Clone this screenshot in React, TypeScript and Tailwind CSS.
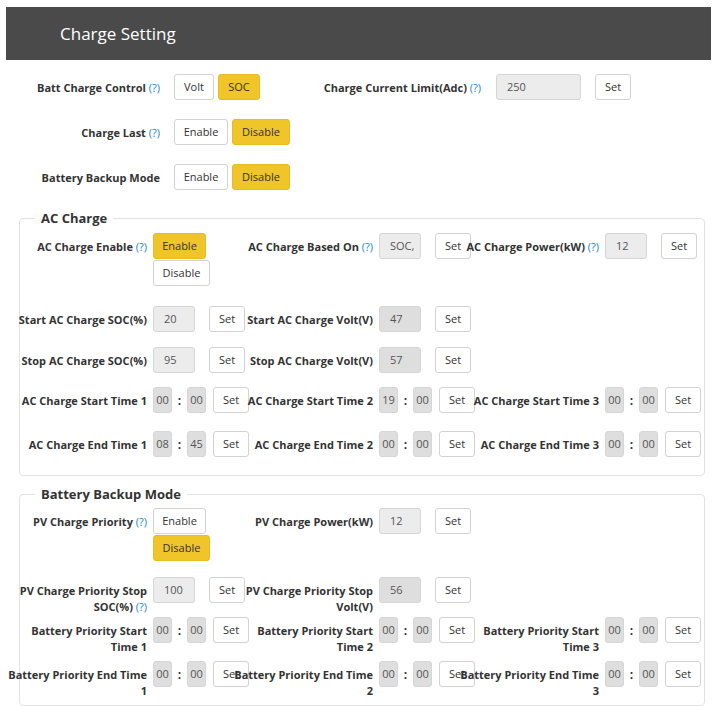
import type { ReactNode } from "react";

const FONT = "font-['Open_Sans','Noto_Sans',sans-serif]";

function Help() {
  return <span className="font-normal text-[#1c87d4]"> (?)</span>;
}

function Btn({ children, active, className = "" }: { children: ReactNode; active?: boolean; className?: string }) {
  return (
    <button
      className={`h-[26px] shrink-0 rounded-[3px] border text-[11px] text-[#333] flex items-center justify-center ${
        active ? "bg-[#f0c529] border-[#e9bd1c]" : "bg-white border-[#d3d3d3]"
      } ${className}`}
    >
      {children}
    </button>
  );
}

function SetBtn({ className = "" }: { className?: string }) {
  return <Btn className={`w-[36px] ${className}`}>Set</Btn>;
}

function Field({ value, dark, className = "" }: { value: string; dark?: boolean; className?: string }) {
  return (
    <input
      readOnly
      value={value}
      className={`h-[26px] shrink-0 rounded-[3px] border border-[#d6d6d6] pl-[10px] pr-0 pb-[2px] text-[11px] text-[#555] outline-none ${
        dark ? "bg-[#dedede]" : "bg-[#ececec]"
      } ${className}`}
    />
  );
}

function TimeBox({ value }: { value: string }) {
  return (
    <input
      readOnly
      value={value}
      className="h-[26px] w-[19px] shrink-0 rounded-[3px] border border-[#d6d6d6] bg-[#dedede] px-0 pb-[2px] text-center text-[11px] text-[#555] outline-none"
    />
  );
}

function Time({ h, m }: { h: string; m: string }) {
  return (
    <div className="flex items-start">
      <TimeBox value={h} />
      <span className="w-[15px] shrink-0 pt-[6px] text-center text-[12px] font-bold leading-[16px] text-[#333]">:</span>
      <TimeBox value={m} />
      <SetBtn className="ml-[7px]" />
    </div>
  );
}

function Cell({ label, help, children }: { label: ReactNode; help?: boolean; children?: ReactNode }) {
  return (
    <div className="flex w-[226px] shrink-0 items-start">
      <div className="w-[140px] shrink-0 pt-[6px] text-right text-[11px] font-bold leading-[16px] text-[#333]">
        {label}
        {help && <Help />}
      </div>
      <div className="ml-[6px] flex items-start">{children}</div>
    </div>
  );
}

function Value({ value, dark }: { value: string; dark?: boolean }) {
  return (
    <>
      <Field value={value} dark={dark} className="w-[42px]" />
      <SetBtn className="ml-[14px]" />
    </>
  );
}

function Toggle({ on }: { on: boolean }) {
  return (
    <div className="flex flex-col items-start gap-[1px]">
      <Btn active={on} className="w-[53px]">Enable</Btn>
      <Btn active={!on} className="w-[57px]">Disable</Btn>
    </div>
  );
}

function TopRow({ label, help, children, className = "" }: { label: string; help?: boolean; children: ReactNode; className?: string }) {
  return (
    <div className={`flex items-start ${className}`}>
      <div className="w-[136px] shrink-0 pt-[6px] text-right text-[11px] font-bold leading-[16px] text-[#333]">
        {label}
        {help && <Help />}
      </div>
      <div className="ml-[14px] flex gap-[4px]">{children}</div>
    </div>
  );
}

export default function App() {
  return (
    <div className={`w-[713px] h-[706px] overflow-hidden bg-white pl-[6px] pt-[7px] ${FONT}`}>
      <div className="flex h-[53px] w-[705px] items-center bg-[#4a4a4a] pl-[54px] text-[17px] text-white">
        Charge Setting
      </div>

      <div className="mt-[14px] ml-[18px]">
        <div className="flex h-[45px] items-start">
          <div className="w-[287px] shrink-0">
            <TopRow label="Batt Charge Control" help>
              <Btn className="w-[40px]">Volt</Btn>
              <Btn active className="w-[42px]">SOC</Btn>
            </TopRow>
          </div>
          <div className="w-[170px] shrink-0 pt-[6px] text-right text-[11px] font-bold leading-[16px] text-[#333]">
            Charge Current Limit(Adc)
            <Help />
          </div>
          <Field value="250" className="ml-[15px] w-[85px]" />
          <SetBtn className="ml-[14px]" />
        </div>
        <TopRow label="Charge Last" help className="h-[45px]">
          <Btn className="w-[54px]">Enable</Btn>
          <Btn active className="w-[58px]">Disable</Btn>
        </TopRow>
        <TopRow label="Battery Backup Mode" className="h-[44px]">
          <Btn className="w-[54px]">Enable</Btn>
          <Btn active className="w-[58px]">Disable</Btn>
        </TopRow>
      </div>

      {/* AC Charge */}
      <fieldset className="ml-[13px] w-[686px] rounded-[4px] border border-[#e3e3e3] pt-[5px] pb-[18px]">
        <legend className="ml-[15px] px-[6px] text-[13px] font-bold leading-[20px] text-[#333]">AC Charge</legend>
        <div className="-ml-[13px]">
          <div className="flex h-[73px]">
            <Cell label="AC Charge Enable" help>
              <Toggle on />
            </Cell>
            <Cell label="AC Charge Based On" help>
              <Value value="SOC," />
            </Cell>
            <Cell label="AC Charge Power(kW)" help>
              <Value value="12" />
            </Cell>
          </div>
          <div className="flex h-[41px]">
            <Cell label="Start AC Charge SOC(%)">
              <Value value="20" />
            </Cell>
            <Cell label="Start AC Charge Volt(V)">
              <Value value="47" dark />
            </Cell>
          </div>
          <div className="flex h-[40px]">
            <Cell label="Stop AC Charge SOC(%)">
              <Value value="95" />
            </Cell>
            <Cell label="Stop AC Charge Volt(V)">
              <Value value="57" dark />
            </Cell>
          </div>
          <div className="flex h-[44px]">
            <Cell label="AC Charge Start Time 1">
              <Time h="00" m="00" />
            </Cell>
            <Cell label="AC Charge Start Time 2">
              <Time h="19" m="00" />
            </Cell>
            <Cell label="AC Charge Start Time 3">
              <Time h="00" m="00" />
            </Cell>
          </div>
          <div className="flex h-[26px]">
            <Cell label="AC Charge End Time 1">
              <Time h="08" m="45" />
            </Cell>
            <Cell label="AC Charge End Time 2">
              <Time h="00" m="00" />
            </Cell>
            <Cell label="AC Charge End Time 3">
              <Time h="00" m="00" />
            </Cell>
          </div>
        </div>
      </fieldset>

      {/* Battery Backup Mode */}
      <fieldset className="mt-[8px] ml-[13px] w-[686px] rounded-[4px] border border-[#e3e3e3] pt-[4px] pb-[18px]">
        <legend className="ml-[15px] px-[6px] text-[13px] font-bold leading-[20px] text-[#333]">Battery Backup Mode</legend>
        <div className="-ml-[13px]">
          <div className="flex h-[69px]">
            <Cell label="PV Charge Priority" help>
              <Toggle on={false} />
            </Cell>
            <Cell label="PV Charge Power(kW)">
              <Value value="12" />
            </Cell>
          </div>
          <div className="flex h-[40px]">
            <Cell label="PV Charge Priority Stop SOC(%)" help>
              <Value value="100" />
            </Cell>
            <Cell label="PV Charge Priority Stop Volt(V)">
              <Value value="56" dark />
            </Cell>
          </div>
          <div className="flex h-[44px]">
            <Cell label="Battery Priority Start Time 1">
              <Time h="00" m="00" />
            </Cell>
            <Cell label="Battery Priority Start Time 2">
              <Time h="00" m="00" />
            </Cell>
            <Cell label="Battery Priority Start Time 3">
              <Time h="00" m="00" />
            </Cell>
          </div>
          <div className="flex h-[26px]">
            <Cell label="Battery Priority End Time 1">
              <Time h="00" m="00" />
            </Cell>
            <Cell label="Battery Priority End Time 2">
              <Time h="00" m="00" />
            </Cell>
            <Cell label="Battery Priority End Time 3">
              <Time h="00" m="00" />
            </Cell>
          </div>
        </div>
      </fieldset>
    </div>
  );
}
